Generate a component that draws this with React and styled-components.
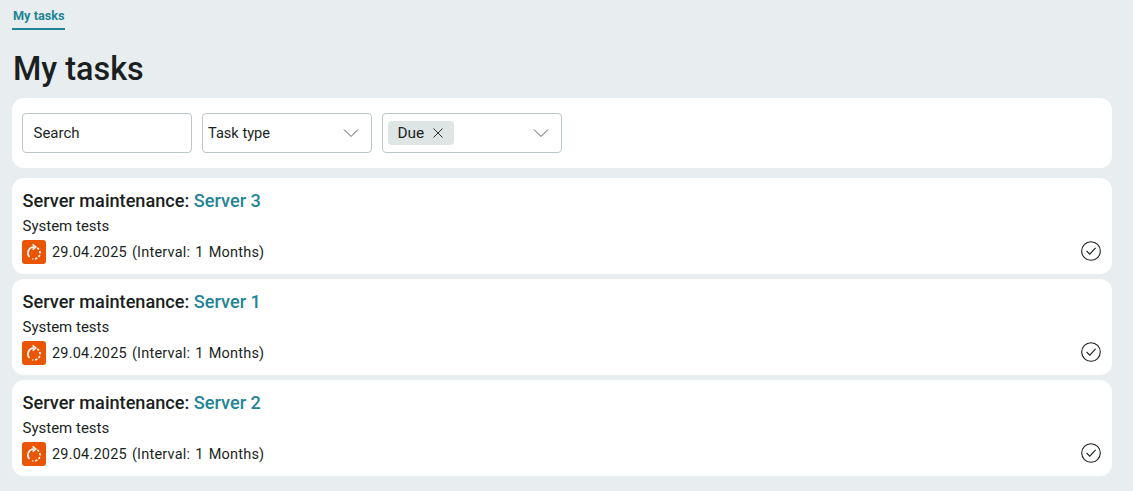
import React from 'react';
import styled, { createGlobalStyle } from 'styled-components';

const GlobalStyle = createGlobalStyle`
  html, body { margin: 0; padding: 0; height: 100%; background: #e8edf0; }
  body { font-family: Roboto, "Liberation Sans", sans-serif; color: #1a1f22; overflow: hidden; }
`;

const Page = styled.div`
  padding: 0 21px 0 12px;
`;

const Tabs = styled.div`
  display: flex;
  height: 30px;
`;

const Tab = styled.div`
  height: 28px;
  border-bottom: 2px solid #1f8594;
  padding-left: 1px;
  font-size: 12.7px;
  line-height: 31px;
  font-weight: 700;
  color: #1f8594;
  box-sizing: content-box;
`;

const Title = styled.h1`
  margin: 0;
  height: 68px;
  padding-left: 1px;
  font-size: 32.4px;
  line-height: 78px;
  font-weight: 500;
  color: #1a1f22;
`;

const FilterCard = styled.div`
  display: flex;
  gap: 10px;
  height: 70px;
  padding: 15px 10px;
  box-sizing: border-box;
  background: #fff;
  border-radius: 12px;
`;

const Field = styled.div`
  display: flex;
  align-items: center;
  justify-content: space-between;
  width: ${p => p.$width}px;
  height: 40px;
  box-sizing: border-box;
  padding: 0 ${p => p.$right}px 0 ${p => p.$left}px;
  border: 1px solid #bcc6c9;
  border-radius: 4px;
  font-size: ${p => p.$size}px;
  background: #fff;
`;

const Chip = styled.div`
  display: flex;
  align-items: center;
  gap: 9px;
  height: 24px;
  padding: 0 11px 0 9.5px;
  border-radius: 4px;
  background: #dfe4e5;
  font-size: 15.4px;
`;

const TaskList = styled.div`
  display: flex;
  flex-direction: column;
  gap: 5px;
  margin-top: 10px;
`;

const TaskCard = styled.div`
  height: 96px;
  box-sizing: border-box;
  padding: 11px 11px 0 10.5px;
  background: #fff;
  border-radius: 12px;
`;

const TaskTitle = styled.div`
  font-size: 18.15px;
  line-height: 23px;
  font-weight: 500;
`;

const ServerLink = styled.span`
  color: #1f8594;
`;

const TaskType = styled.div`
  margin-top: 4px;
  font-size: 15px;
  line-height: 20px;
`;

const TaskFooter = styled.div`
  display: flex;
  align-items: center;
  justify-content: space-between;
  margin-top: 4px;
  margin-left: -0.5px;
`;

const DueInfo = styled.div`
  display: flex;
  align-items: center;
  gap: 6px;
  font-size: 14.5px;
  letter-spacing: 0.2px;
  word-spacing: 1.3px;
`;

const RecurBadge = styled.div`
  display: flex;
  align-items: center;
  justify-content: center;
  width: 24px;
  height: 24px;
  border-radius: 3px;
  background: #ea5504;
`;

const CheckSvg = styled.svg`
  margin-bottom: 3px;
`;

const Chevron = () => (
  <svg width="16" height="10" viewBox="0 0 16 10" fill="none" stroke="#50595d" strokeWidth="1">
    <path d="M1 1.5 8 8.5 15 1.5" />
  </svg>
);

const CloseIcon = () => (
  <svg width="10" height="10" viewBox="0 0 10 10" fill="none" stroke="#2a3033" strokeWidth="1">
    <path d="M.5.5l9 9M9.5.5l-9 9" />
  </svg>
);

const RecurIcon = () => (
  <svg width="18" height="18" viewBox="0 0 18 18" fill="none" stroke="#fff" strokeWidth="1.7">
    <path d="M9 4A6 6 0 0 0 4.5 14" />
    <path d="M12.3 5A6 6 0 0 1 7.4 15.8" strokeDasharray="2.2 1.7" />
    <path d="M7.6 1.4 10.8 4 7.6 6.6" strokeWidth="1.5" />
  </svg>
);

const CheckIcon = () => (
  <CheckSvg width="20" height="20" viewBox="0 0 20 20" fill="none" stroke="#1a1f22" strokeWidth="1.1">
    <circle cx="10" cy="10" r="9.3" />
    <path d="M5.6 10 8.8 13.2 14.6 6.8" />
  </CheckSvg>
);

const tasks = ['Server 3', 'Server 1', 'Server 2'];

const App = () => (
  <Page>
    <GlobalStyle />
    <Tabs>
      <Tab>My tasks</Tab>
    </Tabs>
    <Title>My tasks</Title>
    <FilterCard>
      <Field $width={170} $left={10.5} $right={11} $size={15}>Search</Field>
      <Field $width={170} $left={5} $right={12} $size={14.6}>Task type<Chevron /></Field>
      <Field $width={180} $left={5} $right={12} $size={15}>
        <Chip>Due<CloseIcon /></Chip>
        <Chevron />
      </Field>
    </FilterCard>
    <TaskList>
      {tasks.map(name => (
        <TaskCard key={name}>
          <TaskTitle>Server maintenance: <ServerLink>{name}</ServerLink></TaskTitle>
          <TaskType>System tests</TaskType>
          <TaskFooter>
            <DueInfo>
              <RecurBadge><RecurIcon /></RecurBadge>
              29.04.2025 (Interval: 1 Months)
            </DueInfo>
            <CheckIcon />
          </TaskFooter>
        </TaskCard>
      ))}
    </TaskList>
  </Page>
);

export default App;
